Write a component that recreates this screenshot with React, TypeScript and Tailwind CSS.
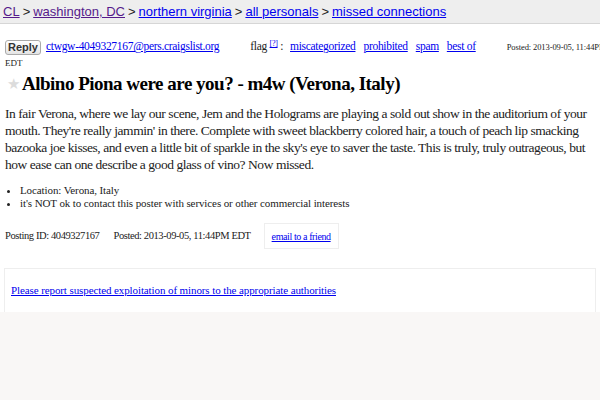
import React from 'react';

const serif = { fontFamily: '"Liberation Serif", "Times New Roman", serif' };

const crumbs = [
  { label: 'CL', visited: true },
  { label: 'washington, DC', visited: true },
  { label: 'northern virginia', visited: false },
  { label: 'all personals', visited: false },
  { label: 'missed connections', visited: false },
];

const flags = ['miscategorized', 'prohibited', 'spam', 'best of'];

const App: React.FC = () => {
  return (
    <div className="w-[600px] h-[400px] overflow-hidden bg-[#f9f7f6] text-[#222]">
      <div className="bg-white">
        <div className="h-[24px] bg-[#eeeeee] border-b border-[#d6d6d6] flex items-center px-[3px] text-[13px] font-['Liberation_Sans',Arial,sans-serif] whitespace-nowrap">
          {crumbs.map((c, i) => (
            <span key={c.label} className="flex items-center">
              {i > 0 && <span className="mx-[3px] text-[#222]">&gt;</span>}
              <a
                href="#"
                className={`underline ${c.visited ? 'text-[#551a8b]' : 'text-[#0000ee]'}`}
              >
                {c.label}
              </a>
            </span>
          ))}
        </div>

        <div style={serif} className="px-[5px]">
          <div className="flex items-center mt-[15px] h-[16px] whitespace-nowrap text-[11.5px] tracking-[-0.3px]">
            <button className="h-[15px] px-[2px] text-[11px] tracking-normal font-['Liberation_Sans',Arial,sans-serif] font-bold text-[#333] bg-gradient-to-b from-white to-[#e4e4e4] border border-[#aaa] rounded-[3px] leading-none">
              Reply
            </button>
            <a href="#" className="ml-[5px] text-[#0000ee] underline">
              ctwgw-4049327167@pers.craigslist.org
            </a>
            <span className="ml-[31px]">
              flag <sup className="text-[8px] text-[#0000ee] underline">[?]</sup> :
            </span>
            <span className="flex gap-[8px] ml-[7px]">
              {flags.map((f) => (
                <a key={f} href="#" className="text-[#0000ee] underline">
                  {f}
                </a>
              ))}
            </span>
            <span className="ml-[31px] text-[8.5px] tracking-[-0.1px] shrink-0">
              Posted: 2013-09-05, 11:44PM
            </span>
          </div>
          <div className="text-[9px] leading-[11px] mt-[3px]">EDT</div>

          <div className="flex items-center mt-[3px]">
            <span className="text-[15px] text-[#dcdcdc] leading-none w-[17px] pl-[2px]">★</span>
            <h2 className="text-[19px] tracking-[-0.5px] font-bold leading-[24px] text-black">
              Albino Piona were are you? - m4w (Verona, Italy)
            </h2>
          </div>

          <p className="mt-[9px] text-[13.5px] tracking-[-0.45px] leading-[17px] w-[592px]">
            In fair Verona, where we lay our scene, Jem and the Holograms are playing a sold out show in the auditorium of your mouth. They're really jammin' in there. Complete with sweet blackberry colored hair, a touch of peach lip smacking bazooka joe kisses, and even a little bit of sparkle in the sky's eye to saver the taste. This is truly, truly outrageous, but how ease can one describe a good glass of vino? Now missed.
          </p>

          <ul className="mt-[11px] ml-[15px] list-disc text-[11px] tracking-[-0.1px] leading-[13px]">
            <li>Location: Verona, Italy</li>
            <li>it's NOT ok to contact this poster with services or other commercial interests</li>
          </ul>

          <div className="flex items-center mt-[13px] text-[10.5px] tracking-[-0.4px] whitespace-nowrap">
            <span>Posting ID: 4049327167</span>
            <span className="ml-[14px]">Posted: 2013-09-05, 11:44PM EDT</span>
            <div className="ml-[13px] border border-[#eee] px-[7px] h-[26px] flex items-center">
              <a href="#" className="text-[#0000ee] underline text-[10px]">
                email to a friend
              </a>
            </div>
          </div>
        </div>

        <div
          style={serif}
          className="mx-[4px] mt-[19px] border border-[#eeeeee] border-b-0 h-[44px] flex items-center px-[6px]"
        >
          <a href="#" className="text-[#0000ee] underline text-[11px] tracking-[-0.1px]">
            Please report suspected exploitation of minors to the appropriate authorities
          </a>
        </div>
      </div>
    </div>
  );
};

export default App;
